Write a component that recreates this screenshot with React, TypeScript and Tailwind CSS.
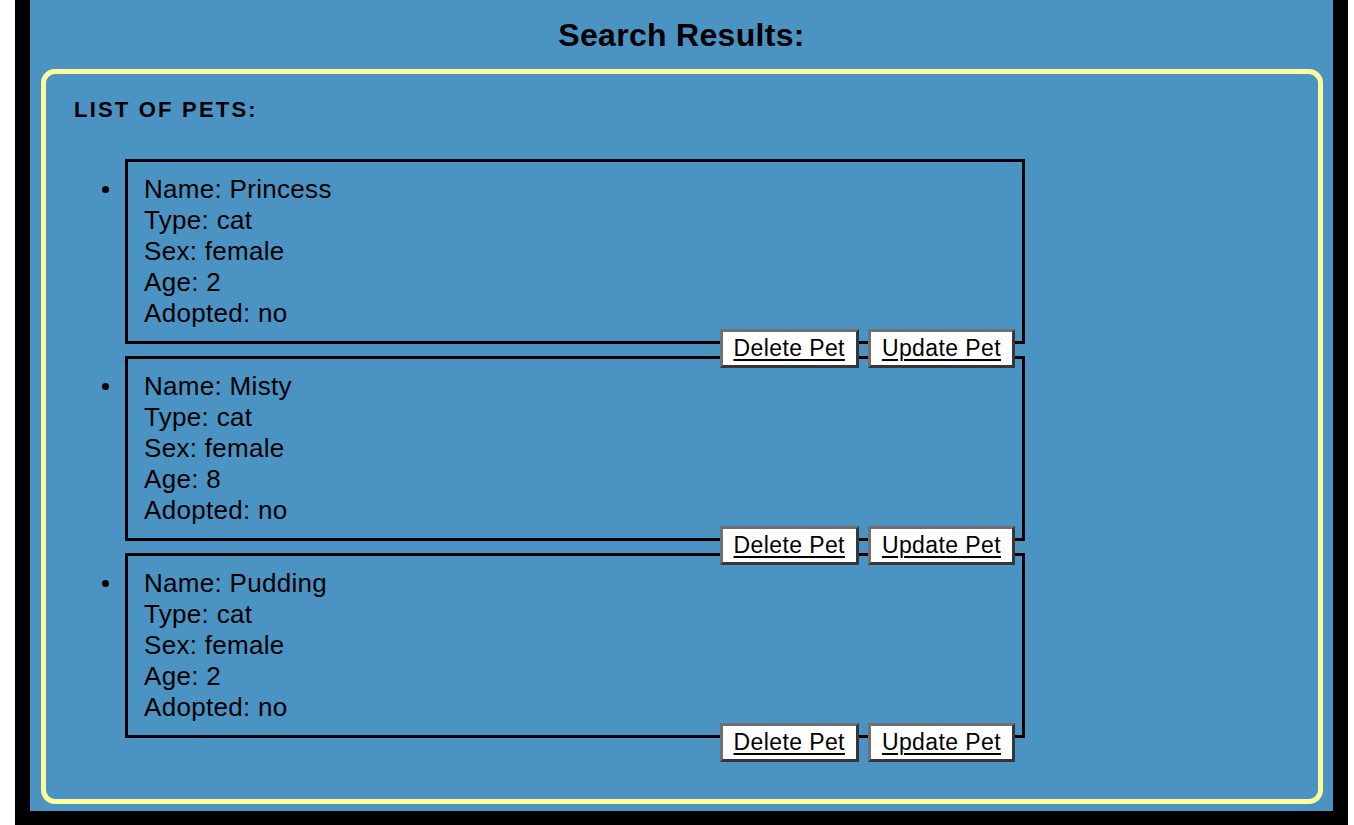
import React from "react";

const pets = [
  { name: "Princess", type: "cat", sex: "female", age: 2, adopted: "no" },
  { name: "Misty", type: "cat", sex: "female", age: 8, adopted: "no" },
  { name: "Pudding", type: "cat", sex: "female", age: 2, adopted: "no" },
];

function PetButton({ label }: { label: string }) {
  return (
    <button
      type="button"
      className="relative z-10 bg-white border-[3px] border-solid border-t-[#707070] border-l-[#707070] border-r-[#363636] border-b-[#363636] px-[11px] py-[4px] text-[23px] leading-[25px] tracking-[0.4px] text-black underline underline-offset-[3px] decoration-[2px]"
    >
      {label}
    </button>
  );
}

export default function App() {
  return (
    <div
      className="min-h-[825px] bg-white"
      style={{ fontFamily: '"Liberation Sans", Arial, sans-serif' }}
    >
      <div className="ml-[15px] w-[1333px] border-x-[15px] border-b-[14px] border-black bg-[#4b93c3] pb-[7px] text-black">
        <h1 className="pt-[17px] text-center text-[32px] leading-[37px] font-bold tracking-[0.3px]">
          Search Results:
        </h1>
        <div className="ml-[11px] mr-[10px] mt-[15px] rounded-[14px] border-[5px] border-[#ffff99] pl-[28px] pt-[24px] pb-[61px]">
          <h3 className="text-[22px] leading-[24px] font-bold tracking-[2.2px] uppercase">
            List of Pets:
          </h3>
          <ul className="mt-[37px] flex flex-col gap-[12px] pl-[28px]">
            {pets.map((p) => (
              <li key={p.name} className="flex items-start">
                <span className="mt-[27px] h-[7px] w-[7px] shrink-0 rounded-full bg-black" />
                <div className="ml-[16px] box-border flex h-[185px] w-[900px] flex-col border-[3px] border-black pl-[16px] pr-[7px] pt-[12px]">
                  <div className="text-[26px] leading-[31px] tracking-[0.3px]">
                    <div>Name: {p.name}</div>
                    <div>Type: {p.type}</div>
                    <div>Sex: {p.sex}</div>
                    <div>Age: {p.age}</div>
                    <div>Adopted: {p.adopted}</div>
                  </div>
                  <div className="flex justify-end gap-[9px]">
                    <PetButton label="Delete Pet" />
                    <PetButton label="Update Pet" />
                  </div>
                </div>
              </li>
            ))}
          </ul>
        </div>
      </div>
    </div>
  );
}
